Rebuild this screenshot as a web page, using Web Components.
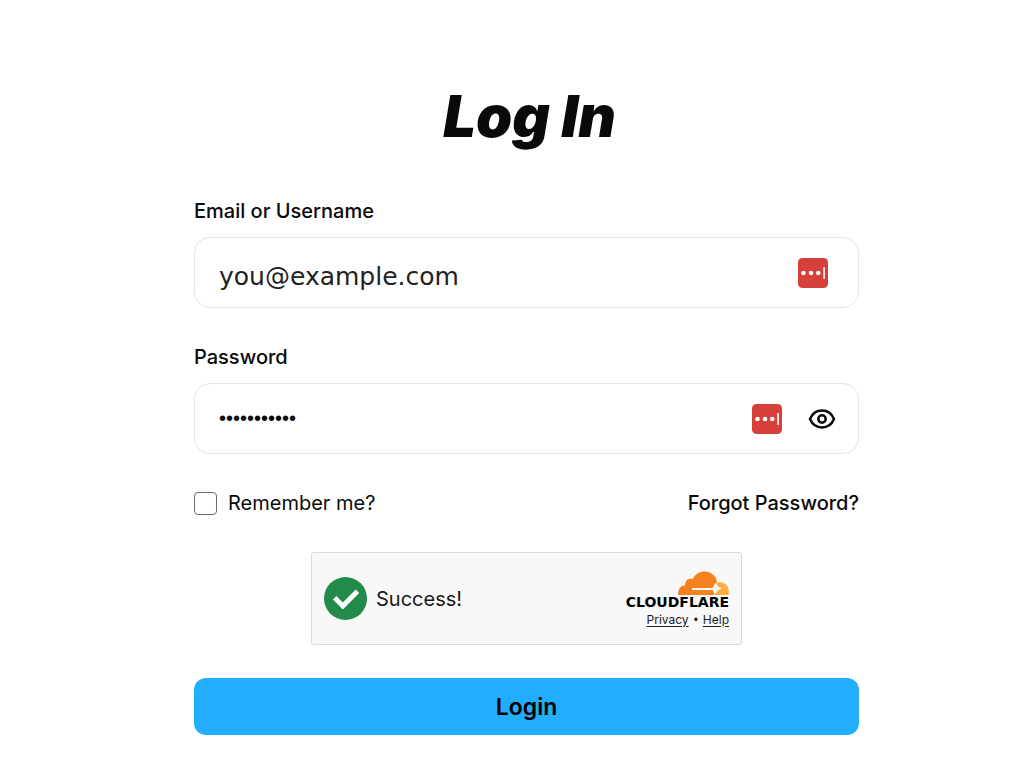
<!DOCTYPE html>
<html lang="en">
<head>
<meta charset="utf-8">
<meta name="viewport" content="width=device-width, initial-scale=1">
<title>Log In</title>
<style>
  body { margin: 0; background: #fff; color: #0a0a0a; font-family: Inter, "Liberation Sans", sans-serif; }
</style>
</head>
<body>
<login-page>
  <text-field slot="fields" label="Email or Username" type="email" placeholder="you@example.com"></text-field>
  <text-field slot="fields" label="Password" type="password" value="password123"></text-field>
  <remember-row slot="options"></remember-row>
  <human-check slot="check">Success!</human-check>
  <submit-button slot="submit">Login</submit-button>
</login-page>

<template id="login-page">
  <style>
    :host { display: block; padding: 84px 16px 31px 45px; }
    form { display: flex; flex-direction: column; max-width: 665px; margin: 0 auto; }
    h1 { margin: 0 0 51px; padding-left: 6px; text-align: center; font-size: 58px; line-height: 64px; font-weight: 900; font-style: italic; }
    .fields { display: flex; flex-direction: column; gap: 37px; margin-bottom: 37px; }
    .options { margin-bottom: 36px; }
    .check { display: flex; justify-content: center; margin-bottom: 33px; }
  </style>
  <form>
    <h1>Log In</h1>
    <div class="fields"><slot name="fields"></slot></div>
    <div class="options"><slot name="options"></slot></div>
    <div class="check"><slot name="check"></slot></div>
    <slot name="submit"></slot>
  </form>
</template>

<template id="text-field">
  <style>
    :host { display: block; }
    label { display: block; margin-bottom: 14px; font-size: 20px; line-height: 24px; font-weight: 500; }
    .box { display: flex; align-items: center; gap: 26px; height: 71px; box-sizing: border-box; padding: 0 22px 0 24px; border: 1px solid #e2e6e6; border-radius: 16px; background: #fff; }
    .box.email { padding-right: 30px; }
    input { flex: 1; min-width: 0; height: 60px; padding: 0; border: 0; outline: 0; background: none; color: #0a0a0a; }
    .email input { box-sizing: border-box; padding-top: 8px; font: 25px "DejaVu Sans", sans-serif; }
    .password input { font: 20px "Liberation Sans", sans-serif; }
    input::placeholder { color: #222; opacity: 1; }
    button { display: flex; padding: 0; border: 0; background: none; color: #0a0a0a; cursor: pointer; }
  </style>
  <label for="control"></label>
  <div class="box">
    <input id="control">
    <manager-badge></manager-badge>
    <button type="button" aria-label="Show password">
      <svg width="28" height="24" viewBox="0 0 28 24" fill="none" stroke="currentColor" stroke-width="2.5">
        <path d="M2 12C4.200 6.800 8.700 3.600 14 3.600S23.800 6.800 26 12C23.800 17.200 19.300 20.400 14 20.400S4.200 17.200 2 12Z"/>
        <circle cx="14" cy="12" r="3.700"/>
      </svg>
    </button>
  </div>
</template>

<template id="manager-badge">
  <style>:host { display: flex; } svg { display: block; }</style>
  <svg width="30" height="30" viewBox="0 0 30 30" aria-hidden="true">
    <rect width="30" height="30" rx="4.500" fill="#d73f3b"/>
    <g fill="#fff"><circle cx="5.500" cy="15" r="2.300"/><circle cx="13" cy="15" r="2.300"/><circle cx="20.300" cy="15" r="2.300"/><rect x="25.300" y="9" width="1.600" height="12" rx=".6"/></g>
  </svg>
</template>

<template id="remember-row">
  <style>
    :host { display: flex; justify-content: space-between; align-items: center; font-size: 20px; line-height: 25px; }
    label { display: flex; align-items: center; gap: 11px; }
    input { appearance: none; box-sizing: border-box; width: 23px; height: 23px; margin: 0; border: 1px solid #6b6b6b; border-radius: 4px; background: #fff; }
    input:checked { background: #22adff; }
    a { color: inherit; font-weight: 500; text-decoration: none; }
  </style>
  <label><input type="checkbox">Remember me?</label>
  <a href="#forgot">Forgot Password?</a>
</template>

<template id="human-check">
  <style>
    :host { display: flex; align-items: center; justify-content: space-between; box-sizing: border-box; width: 431px; height: 93px; padding: 0 12px; border: 1px solid #d9d9d9; border-radius: 3px; background: #f8f8f8; }
    .status { display: flex; align-items: center; gap: 9px; font-size: 20px; line-height: 24px; color: #181818; }
    .brand { display: flex; flex-direction: column; align-items: flex-end; }
    svg { display: block; }
    .name { font: 700 14px/14px "DejaVu Sans", sans-serif; color: #000; }
    .links { display: flex; gap: 5px; margin-top: 4px; font-size: 12px; line-height: 14px; color: #222; }
    .links span { font-family: "Liberation Sans", sans-serif; }
    a { color: inherit; text-underline-offset: 2px; }
  </style>
  <div class="status">
    <svg width="43" height="43" viewBox="0 0 43 43" aria-hidden="true">
      <circle cx="21.500" cy="21.500" r="21.500" fill="#228b49"/>
      <path d="M10.700 20.800 18.800 29 33.500 14.200" fill="none" stroke="#fff" stroke-width="4.800"/>
    </svg>
    <span><slot></slot></span>
  </div>
  <div class="brand">
    <svg width="51" height="24" viewBox="0 0 51 24" aria-hidden="true">
      <path fill="#f6821f" d="M0 24C0 18 2.500 14.600 7.400 14.300 6.700 9.500 10.300 6.800 14.900 8.100 17.100 3 21.300.6 26.700.6 33.200.6 38 5.100 39 11.100L35.500 24Z"/>
      <path fill="#fbad41" d="M40.600 11C46.900 11 50.900 15 50.900 21.300L50.500 24H36L38.500 13.500Z"/>
      <path fill="#f8f8f8" d="M14 17H34.500L37.500 11.500 40 15.500 44 17.500 40 19.200 37 23.200 34.500 19H14Z"/>
    </svg>
    <span class="name">CLOUDFLARE</span>
    <span class="links"><a href="#privacy">Privacy</a><span>•</span><a href="#help">Help</a></span>
  </div>
</template>

<template id="submit-button">
  <style>
    :host { display: block; }
    button { display: block; width: 100%; height: 57px; padding: 0; border: 0; border-radius: 12px; background: #22adff; color: #000; font: 600 23px/28px Inter, sans-serif; cursor: pointer; }
  </style>
  <button type="button"><slot></slot></button>
</template>

<script>
  class TemplateElement extends HTMLElement {
    constructor() {
      super();
      const template = document.getElementById(this.localName);
      this.attachShadow({ mode: "open" }).append(template.content.cloneNode(true));
    }
  }
  class TextField extends TemplateElement {
    connectedCallback() {
      const type = this.getAttribute("type");
      const root = this.shadowRoot;
      const input = root.querySelector("input");
      const toggle = root.querySelector("button");
      root.querySelector("label").textContent = this.getAttribute("label");
      root.querySelector(".box").classList.add(type);
      input.type = type;
      input.placeholder = this.getAttribute("placeholder") || "";
      input.value = this.getAttribute("value") || "";
      if (type !== "password") toggle.remove();
      else toggle.onclick = () => { input.type = input.type === "password" ? "text" : "password"; };
    }
  }
  customElements.define("manager-badge", class extends TemplateElement {});
  customElements.define("text-field", TextField);
  customElements.define("remember-row", class extends TemplateElement {});
  customElements.define("human-check", class extends TemplateElement {});
  customElements.define("submit-button", class extends TemplateElement {});
  customElements.define("login-page", class extends TemplateElement {});
</script>
</body>
</html>
